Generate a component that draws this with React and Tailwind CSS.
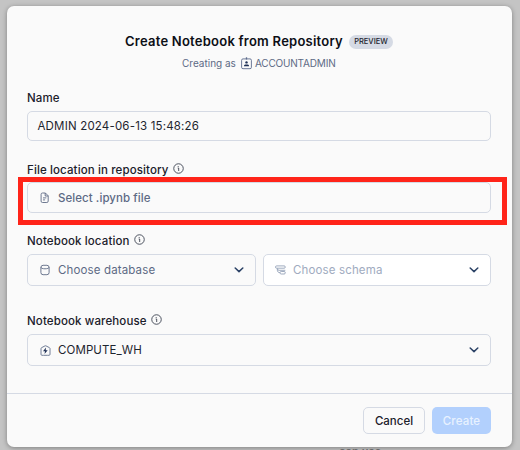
function Info() {
  return (
    <svg className="mb-px ml-[4px] h-[11px] w-[11px] shrink-0" viewBox="0 0 11 11" fill="none" stroke="#3b4250">
      <circle cx="5.5" cy="5.5" r="4.75" strokeWidth="0.9" />
      <path d="M4.7 5h1v3M5.2 3v.9" strokeWidth="0.9" />
    </svg>
  );
}

function Chevron() {
  return (
    <svg className="ml-auto mr-[11px] h-[6px] w-[10px]" viewBox="0 0 10 6" fill="none" stroke="#2b4266" strokeWidth="1.5" strokeLinecap="round" strokeLinejoin="round">
      <path d="M1.2 1 5 4.6 8.8 1" />
    </svg>
  );
}

function BadgeIcon() {
  return (
    <svg className="ml-[5px] mr-[3px] h-[13px] w-[11px]" viewBox="0 0 11 13" fill="none" stroke="#5d6c8d" strokeWidth="0.9">
      <rect x="0.6" y="1.9" width="9.8" height="9.8" rx="1.4" />
      <path d="M5.5 0.3v2.2" strokeWidth="1.3" />
      <circle cx="5.5" cy="5.4" r="1.2" fill="#1e2f55" stroke="none" />
      <path d="M3 9.300V8.700c0-.9.900-1.300 2.500-1.300s2.500.4 2.500 1.300v.6z" fill="#1e2f55" stroke="none" />
    </svg>
  );
}

function FileIcon() {
  return (
    <svg className="h-[12px] w-[10px]" viewBox="0 0 10 12" fill="none" stroke="#5d6a85" strokeWidth="0.9" strokeLinejoin="round">
      <path d="M2.500 1h2.900l2.800 2.800v5.300a1.400 1.400 0 0 1-1.400 1.400H2.500A1.400 1.400 0 0 1 1.100 9.100V2.400A1.400 1.400 0 0 1 2.500 1z" />
      <path d="M5.200 1v3h3M3 5.900h3.300M3 7.900h2.100" />
    </svg>
  );
}

function DatabaseIcon() {
  return (
    <svg className="h-[12px] w-[10px]" viewBox="0 0 10 12" fill="none" stroke="#5d6a85" strokeWidth="0.9">
      <rect x="0.900" y="1.300" width="8.200" height="9.400" rx="2.200" />
      <path d="M.9 3.200c0 1 1.800 1.600 4.100 1.600s4.100-.6 4.100-1.600" />
    </svg>
  );
}

function SchemaIcon() {
  return (
    <svg className="h-[10px] w-[11px]" viewBox="0 0 11 10" fill="none" stroke="#94a1b8" strokeWidth="0.9">
      <rect x="0.500" y="0.900" width="9.800" height="2.300" rx="1.150" />
      <path d="M2.300 3.200v1.200c0 2.200.8 3.300 2.700 3.300M2.400 4c.2.900.8 1.300 1.700 1.300h6.200" />
      <rect x="5" y="6.500" width="5.300" height="2.500" rx="1.200" />
    </svg>
  );
}

function WarehouseIcon() {
  return (
    <svg className="h-[11px] w-[11px]" viewBox="0 0 11 11" fill="none" stroke="#62708c" strokeWidth="0.9" strokeLinejoin="round">
      <path d="M3.700 10.300H2a1 1 0 0 1-1-1V3.600a1 1 0 0 1 .5-.9L5 .9a1 1 0 0 1 1 0l3.500 1.800a1 1 0 0 1 .5.9v5.700a1 1 0 0 1-1 1H7.300M3.700 10.300h3.600" />
      <path d="M6 2.600 3 6.200h2l-.5 2.900 3.200-3.800H5.700z" fill="#1e2f55" stroke="none" />
    </svg>
  );
}

function Label({ children }) {
  return <div className="flex h-[14px] items-center whitespace-nowrap text-[11.5px] font-medium leading-[14px] tracking-[0.12px] text-[#1b202b]">{children}</div>;
}

export default function App() {
  return (
    <div className="relative h-[450px] w-[520px] overflow-hidden bg-[#c4c4c4] pl-[7px] pt-[6px] font-['Inter',sans-serif]">
      <div className="absolute left-[339px] top-[446px] text-[11px] font-semibold leading-[11px] tracking-[0.1px] text-[#777777]">can use</div>
      <div className="relative flex h-[441px] w-[505px] flex-col rounded-[7px] bg-[#fafafa] shadow-[0_1px_5px_rgba(0,0,0,0.35)]">
        <div className="flex h-[388px] flex-col border-b border-[#d5dae4] pl-[20px] pr-[21px] pt-[27px]">
          <div className="flex h-[17px] items-center pl-[98px]">
            <h1 className="whitespace-nowrap text-[13px] font-semibold leading-[17px] tracking-[0.24px] text-[#0c0f16]">Create Notebook from Repository</h1>
            <span className="ml-[6px] flex h-[14px] w-[44px] items-center justify-center rounded-full bg-[#d5dae4] text-[7.500px] font-medium text-[#1e252f]">PREVIEW</span>
          </div>
          <div className="mt-[6px] flex h-[14px] items-center pl-[155px] text-[10px] text-[#5d6a85]">
            <span>Creating as</span>
            <BadgeIcon />
            <span className="tracking-[-0.18px]">ACCOUNTADMIN</span>
          </div>
          <div className="mt-[21px]"><Label><span>Name</span></Label></div>
          <div className="mt-[6px] flex h-[30px] items-center rounded-[5px] border border-[#d5dae4] pl-[9.5px] text-[11.5px] tracking-[0.18px] text-[#1e252f]">
            <span className="pt-[2px]">ADMIN 2024-06-13 15:48:26</span>
          </div>
          <div className="mt-[21px]"><Label><span className="pt-[2px]">File location in repository</span><Info /></Label></div>
          <div className="mt-[6px] flex h-[31px] items-center rounded-[5px] border border-[#d5dae4] pl-[12px] text-[11.5px] font-medium tracking-[0.06px] text-[#5d6a85]">
            <FileIcon />
            <span className="ml-[8px] pt-[3px]">Select .ipynb file</span>
          </div>
          <div className="mt-[20px]"><Label><span className="pt-[2px]">Notebook location</span><Info /></Label></div>
          <div className="mt-[7px] flex gap-[7px] text-[11.5px] tracking-[0.14px]">
            <div className="flex h-[32px] w-[229px] items-center rounded-[5px] border border-[#d5dae4] pl-[12px] text-[#5d6a85]">
              <DatabaseIcon />
              <span className="ml-[8px] pt-[2px]">Choose database</span>
              <Chevron />
            </div>
            <div className="flex h-[32px] flex-1 items-center rounded-[5px] border border-[#d5dae4] bg-white pl-[11px] text-[#a0abc0]">
              <SchemaIcon />
              <span className="ml-[7px] pt-[2px]">Choose schema</span>
              <Chevron />
            </div>
          </div>
          <div className="mt-[27px]"><Label><span className="pt-[2px]">Notebook warehouse</span><Info /></Label></div>
          <div className="mt-[7px] flex h-[32px] items-center rounded-[5px] border border-[#d5dae4] pl-[12px] text-[11.5px] tracking-[0.1px] text-[#1e252f]">
            <WarehouseIcon />
            <span className="ml-[7px] pt-[2px]">COMPUTE_WH</span>
            <Chevron />
          </div>
        </div>
        <div className="flex justify-end gap-[7px] pr-[21px] pt-[13px] text-[11.5px] font-medium">
          <button className="h-[27px] w-[62px] rounded-[5px] border border-[#d5dae4] pt-[2px] text-[#1b202b]">Cancel</button>
          <button className="h-[27px] w-[59px] rounded-[5px] bg-[#b2d0fd] pt-[2px] tracking-[0.15px] text-[#e8f2ff]">Create</button>
        </div>
      </div>
      <div className="absolute left-[18px] top-[177px] h-[48px] w-[489px] border-[5px] border-[#ff2419]" />
    </div>
  );
}
